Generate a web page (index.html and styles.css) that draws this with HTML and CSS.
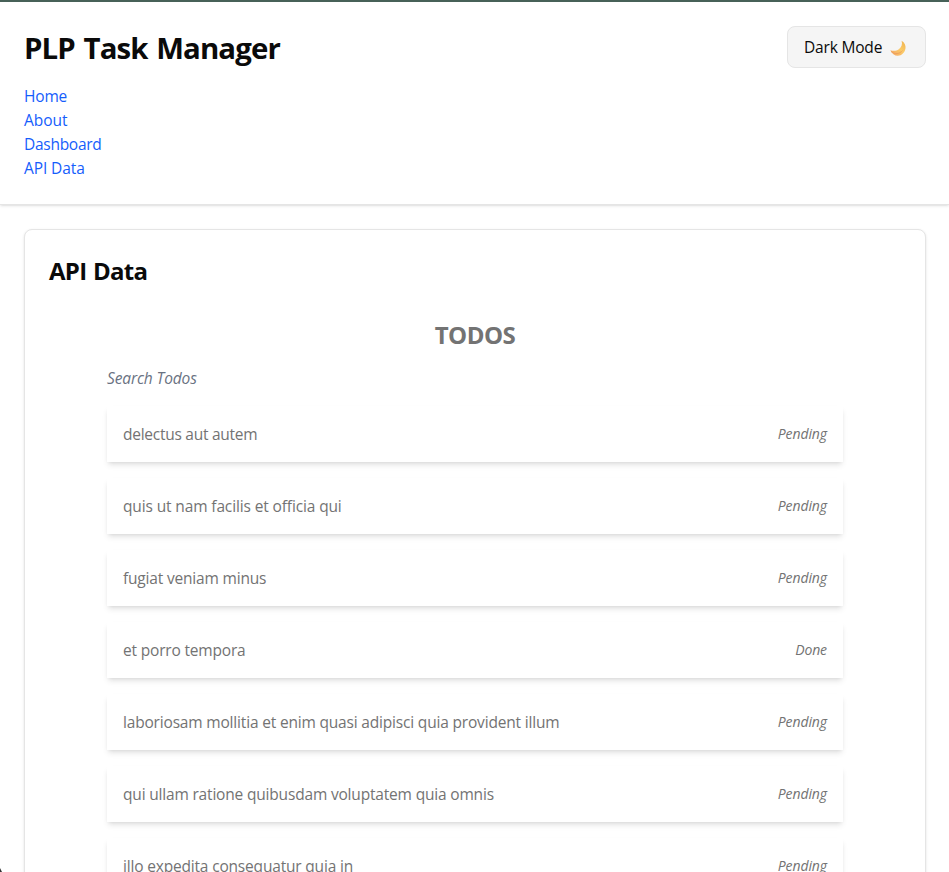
FILE: index.html
```html
<!DOCTYPE html>
<html lang="en">
<head>
<meta charset="utf-8">
<title>PLP Task Manager</title>
<link rel="stylesheet" href="styles.css">
</head>
<body>
<header class="header">
  <div class="header-row">
    <h1 class="brand">PLP Task Manager</h1>
    <button class="theme-toggle" type="button"><span>Dark Mode</span>
      <svg class="moon" viewBox="0 0 16 16" aria-hidden="true">
        <defs><linearGradient id="g" x1="1" y1="0" x2="0" y2="1"><stop offset="0" stop-color="#efb04c"/><stop offset=".45" stop-color="#fbcb68"/><stop offset="1" stop-color="#f3a263"/></linearGradient></defs>
        <path fill="url(#g)" d="M11.600.7C14.700 2.600 15.900 5.600 15.500 8.200C14.900 12.400 11.700 15.700 7.800 15.700C4.600 15.700 1.800 13.700.3 10.200C3.200 11.200 6.400 11.100 8.800 9.300C11.600 7.300 12.600 4 11.600.7Z"/>
        <path fill="none" stroke="#e9975b" stroke-width=".7" d="M1 11.400c4 3.400 8.500 2.600 11.500-.8"/>
      </svg>
    </button>
  </div>
  <nav class="nav">
    <a>Home</a><a class="nav-about">About</a><a class="nav-dashboard">Dashboard</a><a class="nav-api">API Data</a>
  </nav>
</header>
<main class="main">
  <section class="card">
    <h2 class="card-title">API Data</h2>
    <div class="todos">
      <h2 class="todos-title">TODOS</h2>
      <div class="search">Search Todos</div>
      <ul class="list">
        <li class="item tight"><span>delectus aut autem</span><em>Pending</em></li>
        <li class="item loose"><span>quis ut nam facilis et officia qui</span><em>Pending</em></li>
        <li class="item"><span>fugiat veniam minus</span><em>Pending</em></li>
        <li class="item"><span>et porro tempora</span><em>Done</em></li>
        <li class="item"><span>laboriosam mollitia et enim quasi adipisci quia provident illum</span><em>Pending</em></li>
        <li class="item"><span>qui ullam ratione quibusdam voluptatem quia omnis</span><em>Pending</em></li>
        <li class="item"><span>illo expedita consequatur quia in</span><em>Pending</em></li>
      </ul>
    </div>
  </section>
</main>
<i class="corner"></i>
</body>
</html>
```
FILE: styles.css
```css
* { box-sizing: border-box; margin: 0; padding: 0; }
html { height: 100%; overflow: hidden; }
body {
  height: 100%;
  overflow: hidden;
  border-top: 2px solid #476158;
  background: #fff;
  color: #0a0a0a;
  font: 15.5px/24px "Open Sans", "Noto Sans", sans-serif;
  letter-spacing: -0.18px;
}
.header {
  padding: 24px 23px 24px 24px;
  background: #fff;
  border-bottom: 1px solid #e5e5e5;
  box-shadow: 0 1px 3px rgb(0 0 0 / .1), 0 1px 2px -1px rgb(0 0 0 / .1);
}
.header-row { display: flex; justify-content: space-between; align-items: center; margin-bottom: 16px; }
.brand { padding-top: 2px; font-size: 29.4px; line-height: 36px; font-weight: 700; letter-spacing: -0.9px; word-spacing: 2px; }
.theme-toggle {
  display: flex;
  align-items: center;
  gap: 8px;
  width: 139px;
  height: 42px;
  padding: 0 16px;
  border: 1px solid #e5e5e5;
  border-radius: 8px;
  background: #f5f5f5;
  color: #0a0a0a;
  font: inherit;
  letter-spacing: inherit;
  white-space: nowrap;
}
.moon { width: 16px; height: 16px; flex: none; margin-top: 2px; }
.nav { display: flex; flex-direction: column; align-items: flex-start; color: #155dfc; }
.nav-about { letter-spacing: 0; }
.nav-dashboard { letter-spacing: -0.28px; }
.nav-api { letter-spacing: -0.1px; }
.main { padding: 24px 23px 24px 24px; }
.card {
  height: 900px;
  padding: 25px 24px 24px;
  border: 1px solid #e5e5e5;
  border-radius: 8px;
  background: #fff;
  box-shadow: 0 1px 3px rgb(0 0 0 / .1), 0 1px 2px -1px rgb(0 0 0 / .1);
}
.card-title, .todos-title { font-size: 24px; line-height: 32px; font-weight: 700; letter-spacing: -0.5px; }
.card-title { margin-bottom: 32px; letter-spacing: -0.7px; word-spacing: 1px; }
.todos { width: 736px; margin: 0 auto; color: #737373; }
.todos-title { text-align: center; margin-bottom: 15px; }
.search { font-style: italic; color: #6a7282; margin-bottom: 16px; letter-spacing: -0.12px; }
.list { list-style: none; display: flex; flex-direction: column; gap: 16px; }
.item {
  display: flex;
  align-items: center;
  justify-content: space-between;
  height: 56px;
  padding: 0 16px;
  background: #fff;
  box-shadow: 0 4px 6px -1px rgb(0 0 0 / .1), 0 2px 4px -2px rgb(0 0 0 / .1);
}
.tight span { letter-spacing: -0.26px; }
.loose span { letter-spacing: -0.13px; }
.item em { font-size: 14px; line-height: 20px; letter-spacing: -0.1px; }
.corner { position: fixed; left: 0; bottom: 0; width: 2px; height: 4px; background: #333; clip-path: polygon(0 0, 100% 100%, 0 100%); }
```
